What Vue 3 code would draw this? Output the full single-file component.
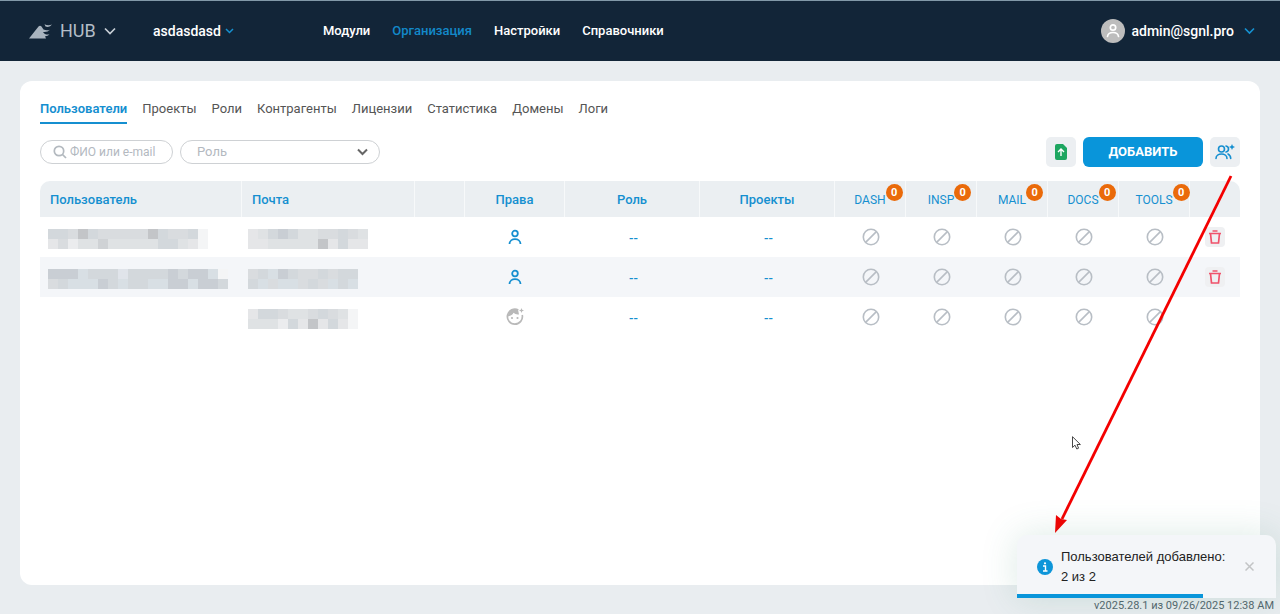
<script setup>
const nav = ['Модули', 'Организация', 'Настройки', 'Справочники']
const tabs = ['Пользователи', 'Проекты', 'Роли', 'Контрагенты', 'Лицензии', 'Статистика', 'Домены', 'Логи']
const modules = ['DASH', 'INSP', 'MAIL', 'DOCS', 'TOOLS']
const progress = 72

// Redacted values: two rows of cells, each letter is a shade of the palette.
const shades = {
  a: '#c3c5c8', b: '#cfd2d5', c: '#d3d8dc', d: '#d9dcdf', e: '#dfe2e4',
  f: '#e5e6e8', g: '#ebecee', h: '#f4f5f6', i: '#c9ced4', j: '#d8dfe4', k: '#e0e4ea'
}
const rows = [
  { name: ['ccdacdddddacddch', 'fdgeebeeeeeccefh'], mail: ['feciceeddcde', 'ffeeeeeafcff'], user: true },
  { name: ['iiijccckcccciciijh', 'dcjjjicjccjjiijiic'], mail: ['dcjicddcdcc', 'cjdjjdcdjcj'], user: true },
  { name: null, mail: ['fccdeedcdeh', 'eeegcfafcfh'], user: false }
]
const cells = (lines) => lines.map((line) => [...line].map((c) => shades[c]))
</script>

<template>
  <div class="page">
    <header class="topbar">
      <a class="brand" href="#">
        <svg width="23" height="16" viewBox="0 0 23 16" fill="#a9b4bf" aria-hidden="true">
          <path d="M0 15.500 9.500 3.500Q11 2 12.500 3.500L14.500 6.500Q17.500 8 21 6.700Q18.500 9.500 14 9Q15.500 12 20.500 11.500Q18.500 13.500 16 13.300L17 15.500Z" />
          <path d="M15.500 1.200Q19 3 23 1.500Q20.500 5 16.500 3.500Z" />
        </svg>
        <span class="hub">HUB</span>
        <svg width="12" height="8" viewBox="0 0 12 8" fill="none" stroke="#c7ced5" stroke-width="1.700" aria-hidden="true"><path d="M1 1.500 6 6.500 11 1.500" /></svg>
      </a>
      <button class="company" type="button">
        asdasdasd
        <svg width="9" height="6" viewBox="0 0 9 6" fill="none" stroke="#1691d0" stroke-width="1.500" aria-hidden="true"><path d="M1 1 4.500 4.500 8 1" /></svg>
      </button>
      <nav class="nav">
        <a v-for="(n, i) in nav" :key="n" href="#" :class="{ on: i === 1 }">{{ n }}</a>
      </nav>
      <button class="account" type="button">
        <svg width="24" height="24" viewBox="0 0 24 24" aria-hidden="true">
          <circle cx="12" cy="12" r="12" fill="#bdbdbd" />
          <g fill="none" stroke="#fff" stroke-width="1.700" stroke-linecap="round"><circle cx="12" cy="8.500" r="2.700" /><path d="M6.500 17.500Q7 13.500 12 13.500T17.500 17.500" /></g>
        </svg>
        <span>admin@sgnl.pro</span>
        <svg class="chev" width="11" height="8" viewBox="0 0 11 8" fill="none" stroke="#1691d0" stroke-width="1.700" aria-hidden="true"><path d="M1 1.500 5.500 6 10 1.500" /></svg>
      </button>
    </header>

    <main class="card">
      <nav class="tabs">
        <a v-for="(t, i) in tabs" :key="t" href="#" :class="{ on: i === 0 }">{{ t }}</a>
      </nav>

      <div class="tools">
        <label class="search">
          <svg width="14" height="14" viewBox="0 0 14 14" fill="none" stroke="#b3b9bf" stroke-width="1.700" aria-hidden="true"><circle cx="6" cy="6" r="4.700" /><path d="M9.500 9.500 13 13" /></svg>
          <input type="text" placeholder="ФИО или e-mail" aria-label="ФИО или e-mail" />
        </label>
        <div class="role">
          <select aria-label="Роль"><option>Роль</option></select>
          <svg width="11" height="8" viewBox="0 0 11 8" fill="none" stroke="#666" stroke-width="2" aria-hidden="true"><path d="M1 1.500 5.500 6 10 1.500" /></svg>
        </div>
        <div class="actions">
          <button class="square" type="button" aria-label="Загрузить файл">
            <svg width="12" height="16" viewBox="0 0 12 16" aria-hidden="true"><path d="M2 0H8L12 4V14A2 2 0 0 1 10 16H2A2 2 0 0 1 0 14V2A2 2 0 0 1 2 0Z" fill="#1da660" /><path d="M6 12V5M3 8 6 5 9 8" fill="none" stroke="#fff" stroke-width="1.400" /></svg>
          </button>
          <button class="add" type="button">ДОБАВИТЬ</button>
          <button class="square" type="button" aria-label="Добавить пользователей">
            <svg width="20" height="16" viewBox="0 0 20 16" fill="none" stroke="#158fd0" stroke-width="1.600" stroke-linecap="round" aria-hidden="true"><circle cx="6.500" cy="5" r="3" /><path d="M1 14.500C1 8.500 12 8.500 12 14.500M11 2Q13.500 2.500 13.500 5T11 8M13 10Q15.700 11.500 15.700 14.500" /><path d="M17 0 17.900 2.100 20 3 17.900 3.900 17 6 16.100 3.900 14 3 16.100 2.100Z" fill="#158fd0" stroke="none" /></svg>
          </button>
        </div>
      </div>

      <table>
        <colgroup>
          <col /><col class="c-mail" /><col class="c-gap" /><col class="c-right" /><col class="c-wide" /><col class="c-wide" />
          <col v-for="m in modules" :key="m" class="c-mod" /><col class="c-gap" />
        </colgroup>
        <thead>
          <tr>
            <th class="left">Пользователь</th><th class="left">Почта</th><th></th><th>Права</th><th>Роль</th><th>Проекты</th>
            <th v-for="m in modules" :key="m" class="mod"><span class="modname">{{ m }}<span class="badge">0</span></span></th>
            <th></th>
          </tr>
        </thead>
        <tbody>
          <tr v-for="(r, i) in rows" :key="i">
            <td v-for="key in ['name', 'mail']" :key="key" :class="key">
              <div v-if="r[key]" class="mosaic">
                <div v-for="(line, y) in cells(r[key])" :key="y" class="line"><i v-for="(c, x) in line" :key="x" :style="{ background: c }"></i></div>
              </div>
            </td>
            <td></td>
            <td>
              <svg v-if="r.user" width="14" height="16" viewBox="0 0 14 16" fill="none" stroke="#158fd0" stroke-width="1.800" aria-hidden="true"><circle cx="7" cy="4.500" r="2.800" /><path d="M1.500 15C1.500 8.500 12.500 8.500 12.500 15" /></svg>
              <svg v-else width="18" height="18" viewBox="0 0 18 18" aria-hidden="true">
                <path d="M12.300 2A7.500 7.500 0 1 0 16.200 7" fill="none" stroke="#b9b9b9" stroke-width="1.700" />
                <path d="M1.500 8.500Q6.500 7.800 7.500 4.800Q9.500 7 13 6.500L12 1.500Q8 0 4.500 2.500Q2 4.500 1.500 8.500ZM15.500 0 16.200 1.800 18 2.500 16.200 3.200 15.500 5 14.800 3.200 13 2.500 14.800 1.800Z" fill="#b9b9b9" />
                <circle cx="6" cy="10" r="1.100" fill="#b9b9b9" /><circle cx="11.500" cy="10" r="1.100" fill="#b9b9b9" />
              </svg>
            </td>
            <td class="dash">--</td><td class="dash">--</td>
            <td v-for="m in modules" :key="m">
              <svg width="18" height="18" viewBox="0 0 18 18" fill="none" stroke="#b8bec5" stroke-width="1.600" aria-hidden="true"><circle cx="9" cy="9" r="7.700" /><path d="M3.600 14.400 14.400 3.600" /></svg>
            </td>
            <td>
              <button v-if="r.user" class="del" type="button" aria-label="Удалить">
                <svg width="12" height="14" viewBox="0 0 12 14" fill="none" stroke="#f0526b" stroke-width="1.700" aria-hidden="true"><path d="M0 3.500H12M3.500 1H8.500M1.500 3.500 2.500 13H9.500L10.500 3.500" /></svg>
              </button>
            </td>
          </tr>
        </tbody>
      </table>
    </main>

    <footer>v2025.28.1 из 09/26/2025 12:38 AM</footer>

    <svg class="arrow" width="180" height="362" viewBox="0 0 180 362" aria-hidden="true"><path d="M176 2 7 345" stroke="#f40000" stroke-width="2.800" /><path d="M0 359 1 341 6 345 12 346Z" fill="#f40000" /></svg>
    <svg class="cursor" width="9" height="14" viewBox="0 0 9 14" aria-hidden="true"><path d="M.5.700V11.500L3 9.200 4.800 13 6.600 12.200 5 8.500H8.400Z" fill="#fff" stroke="#333" stroke-width=".9" /></svg>

    <aside class="toast" role="status">
      <svg class="info" width="16" height="16" viewBox="0 0 16 16" aria-hidden="true"><circle cx="8" cy="8" r="8" fill="#0d95d9" /><path d="M6 7H8.500V12M6 12H10.500" fill="none" stroke="#fff" stroke-width="1.400" /><circle cx="8" cy="4.300" r="1.100" fill="#fff" /></svg>
      <p>Пользователей добавлено:<br />2 из 2</p>
      <button type="button" aria-label="Закрыть"><svg width="9" height="9" viewBox="0 0 9 9" stroke="#c2c4c6" stroke-width="1.500" aria-hidden="true"><path d="M.5.500 8.500 8.500M8.500.500.500 8.500" /></svg></button>
      <div class="bar" :style="{ width: progress + '%' }"></div>
    </aside>
  </div>
</template>

<style>
body { margin: 0; }
</style>

<style scoped>
* { box-sizing: border-box; }
.page { position: relative; display: flex; flex-direction: column; min-height: 100vh; background: #e9edf0; font-family: Roboto, "Liberation Sans", sans-serif; font-size: 13px; line-height: 20px; overflow: hidden; }
a { color: inherit; text-decoration: none; }
button { border: 0; padding: 0; background: none; font: inherit; color: inherit; cursor: pointer; }
svg { display: block; flex: none; }
.topbar { display: flex; align-items: center; height: 61px; padding: 0 25px 0 29px; border-top: 1px solid #8299a8; background: #122538; color: #fff; font-weight: 500; }
.brand { display: flex; align-items: center; width: 124px; }
.hub { width: 44px; margin-left: 8px; color: #b3bdc7; font-size: 18px; font-weight: 400; line-height: 24px; }
.company { display: flex; align-items: center; gap: 4px; width: 170px; font-size: 14px; }
.nav { display: flex; gap: 22px; }
.nav .on { color: #1389c9; }
.account { display: flex; align-items: center; gap: 6px; margin-left: auto; font-size: 14px; }
.chev { margin-left: 4px; }
.card { flex: 1; margin: 20px 20px 0; padding: 18px 20px 20px; border-radius: 12px; background: #fff; }
.tabs { display: flex; gap: 15px; color: #555; }
.tabs a { height: 25px; }
.tabs .on { border-bottom: 2px solid #158fd0; color: #158fd0; font-weight: 600; }
.tools { display: flex; align-items: center; gap: 7px; height: 30px; margin: 13px 0 14px; color: #b3b9bf; }
.search, .role { display: flex; align-items: center; height: 24px; border: 1px solid #ced1d4; border-radius: 12px; }
.search { width: 133px; gap: 3px; padding: 0 8px 0 12px; }
.search input { width: 100%; min-width: 0; padding: 0; border: 0; outline: 0; background: none; font: 12px/20px Roboto, sans-serif; }
.search input::placeholder { color: #b3b9bf; opacity: 1; }
.role { position: relative; width: 200px; }
.role select { appearance: none; width: 100%; height: 22px; padding: 0 30px 0 16px; border: 0; background: none; color: #b3b9bf; font: inherit; }
.role svg { position: absolute; right: 11px; pointer-events: none; }
.actions { display: flex; gap: 7px; margin-left: auto; }
.square { display: grid; place-items: center; width: 30px; height: 30px; border-radius: 5px; background: #eceff2; }
.add { width: 120px; height: 30px; border-radius: 6px; background: #0995da; color: #fff; font-weight: 700; }
table { width: 100%; border-collapse: separate; border-spacing: 0; table-layout: fixed; color: #158fd0; }
.c-mail { width: 173px; }
.c-gap { width: 50px; }
.c-right { width: 100px; }
.c-wide { width: 135px; }
.c-mod { width: 71px; }
th { height: 36px; padding: 2px 0 0; border-right: 1px solid #f7f9fa; background: #ebeff2; font-weight: 500; }
th:first-child { border-top-left-radius: 10px; }
th:last-child { border-top-right-radius: 10px; border-right: 0; }
th.left { padding-left: 10px; text-align: left; }
.mod { font-size: 12px; font-weight: 400; }
.modname { position: relative; }
.badge { position: absolute; left: 100%; top: -9px; width: 17px; height: 17px; border-radius: 50%; background: #ea6a0a; color: #fff; font-size: 11px; font-weight: 700; line-height: 17px; text-align: center; }
td { height: 40px; padding: 0; text-align: center; }
td > svg { margin: 0 auto; }
tbody tr:nth-child(2) td { background: #f4f6f9; }
.dash { padding: 3px 0 0 2px; font-weight: 500; }
.name { padding: 4px 0 0 8px; }
.mail { padding: 4px 0 0 6px; }
.line { display: flex; }
.line i { width: 10px; height: 10px; }
.del { display: grid; place-items: center; width: 20px; height: 20px; margin: 0 auto; border-radius: 4px; background: #eff0f2; }
footer { display: flex; align-items: flex-end; justify-content: flex-end; height: 29px; padding-right: 6px; color: #54656d; font-size: 11px; line-height: 16px; }
.arrow { position: absolute; top: 174px; right: 45px; pointer-events: none; }
.cursor { position: absolute; top: 436px; right: 199px; pointer-events: none; }
.toast { position: absolute; right: 4px; bottom: 16px; display: flex; align-items: center; width: 259px; height: 63px; padding: 0 22px 0 20px; border-radius: 10px 10px 0 0; background: #f4f6f9; box-shadow: 0 0 36px rgba(60, 140, 110, .18); color: #222; font: 13px/20px "Liberation Sans", sans-serif; }
.toast p { flex: 1; margin: 0 0 0 8px; }
.bar { position: absolute; left: 0; bottom: 0; height: 4px; background: #0995da; }
</style>
